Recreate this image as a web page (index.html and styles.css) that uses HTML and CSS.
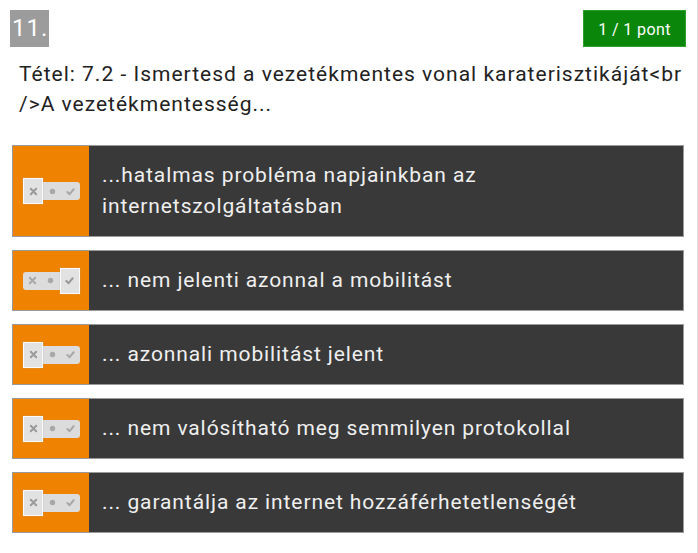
FILE: index.html
```html
<!DOCTYPE html>
<html>
<head>
<meta charset="utf-8">
<link rel="stylesheet" href="styles.css">
</head>
<body>
<div class="page">
  <div class="head">
    <div class="num">11.</div>
    <div class="score">1 / 1 pont</div>
  </div>
  <div class="question">Tétel: 7.2 - Ismertesd a vezetékmentes vonal karaterisztikáját&lt;br /&gt;A vezetékmentesség...</div>
  <div class="answers">
    <div class="row">
      <div class="side"><div class="tog sel-x"><span class="seg s1"><svg viewBox="0 0 10 10"><path d="M2 2L8 8M8 2L2 8"/></svg></span><span class="seg s2"><svg viewBox="0 0 10 10"><circle cx="5" cy="5" r="3"/></svg></span><span class="seg s3"><svg viewBox="0 0 10 10"><path d="M1.5 5.5L4 8L8.5 2.5"/></svg></span></div></div>
      <div class="txt">...hatalmas probléma napjainkban az internetszolgáltatásban</div>
    </div>
    <div class="row">
      <div class="side"><div class="tog sel-c"><span class="seg s1"><svg viewBox="0 0 10 10"><path d="M2 2L8 8M8 2L2 8"/></svg></span><span class="seg s2"><svg viewBox="0 0 10 10"><circle cx="5" cy="5" r="3"/></svg></span><span class="seg s3"><svg viewBox="0 0 10 10"><path d="M1.5 5.5L4 8L8.5 2.5"/></svg></span></div></div>
      <div class="txt">... nem jelenti azonnal a mobilitást</div>
    </div>
    <div class="row">
      <div class="side"><div class="tog sel-x"><span class="seg s1"><svg viewBox="0 0 10 10"><path d="M2 2L8 8M8 2L2 8"/></svg></span><span class="seg s2"><svg viewBox="0 0 10 10"><circle cx="5" cy="5" r="3"/></svg></span><span class="seg s3"><svg viewBox="0 0 10 10"><path d="M1.5 5.5L4 8L8.5 2.5"/></svg></span></div></div>
      <div class="txt">... azonnali mobilitást jelent</div>
    </div>
    <div class="row">
      <div class="side"><div class="tog sel-x"><span class="seg s1"><svg viewBox="0 0 10 10"><path d="M2 2L8 8M8 2L2 8"/></svg></span><span class="seg s2"><svg viewBox="0 0 10 10"><circle cx="5" cy="5" r="3"/></svg></span><span class="seg s3"><svg viewBox="0 0 10 10"><path d="M1.5 5.5L4 8L8.5 2.5"/></svg></span></div></div>
      <div class="txt">... nem valósítható meg semmilyen protokollal</div>
    </div>
    <div class="row">
      <div class="side"><div class="tog sel-x"><span class="seg s1"><svg viewBox="0 0 10 10"><path d="M2 2L8 8M8 2L2 8"/></svg></span><span class="seg s2"><svg viewBox="0 0 10 10"><circle cx="5" cy="5" r="3"/></svg></span><span class="seg s3"><svg viewBox="0 0 10 10"><path d="M1.5 5.5L4 8L8.5 2.5"/></svg></span></div></div>
      <div class="txt">... garantálja az internet hozzáférhetetlenségét</div>
    </div>
  </div>
</div>
</body>
</html>
```
FILE: styles.css
```css
html, body { margin: 0; padding: 0; background: #fff; }
body { font-family: Roboto, "Noto Sans", sans-serif; color: #222; }
.page { padding: 10px 13px 0 10px; border-right: 1px solid #ddd; min-height: 543px; width: 674px; }
.head { display: flex; justify-content: space-between; align-items: flex-start; }
.num { background: #9c9c9c; color: #fff; font-size: 24px; letter-spacing: 1px; line-height: 37px; height: 37px; width: 39px; padding-left: 2px; box-sizing: border-box; }
.score { background: #0a870a; color: #fff; font-size: 16px; letter-spacing: 0.4px; line-height: 37px; height: 37px; width: 103px; text-align: center; border: 1px solid #2ea02e; box-sizing: border-box; margin-right: -2px; }
.question { font-size: 21px; letter-spacing: 1px; line-height: 30px; margin: 12px 0 0 9px; color: #222; }
.answers { display: flex; flex-direction: column; gap: 13px; margin: 26px 0 0 2px; }
.row { display: flex; background: #393939; border: 1px solid #9a9a9a; min-height: 58px; }
.side { width: 76px; flex: none; background: #ef8300; display: flex; align-items: center; padding-left: 10px; box-sizing: border-box; }
.txt { color: #efefef; font-size: 21px; letter-spacing: 0.9px; line-height: 31px; padding: 14px 14px 14px 13px; display: flex; align-items: center; }
.tog { position: relative; display: flex; width: 57px; height: 18px; background: #dcdcdc; border-radius: 3px; }
.seg { flex: 1; display: flex; align-items: center; justify-content: center; position: relative; }
.seg svg { width: 9px; height: 9px; }
.seg path { stroke: #a8a8a8; stroke-width: 2.2; fill: none; stroke-linecap: round; stroke-linejoin: round; }
.seg circle { fill: #a8a8a8; }
.sel-x .s1, .sel-c .s3 { background: #e2e2e2; border: 1px solid #fafafa; height: 26px; margin: -4px 0; box-sizing: border-box; box-shadow: 0 0 1px #aaa; }
.sel-x .s1 path, .sel-c .s3 path { stroke: #999; }
```
